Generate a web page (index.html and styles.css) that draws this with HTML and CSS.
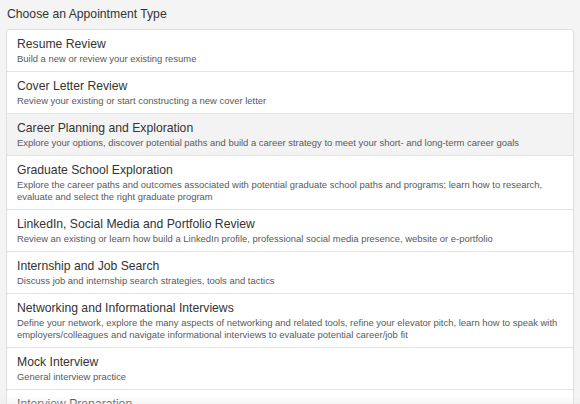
FILE: index.html
```html
<!DOCTYPE html>
<html>
<head>
<meta charset="utf-8">
<link rel="stylesheet" href="styles.css">
</head>
<body>
<div class="page">
  <h1 class="heading">Choose an Appointment Type</h1>
  <ul class="list">
    <li class="item">
      <div class="title">Resume Review</div>
      <div class="desc">Build a new or review your existing resume</div>
    </li>
    <li class="item">
      <div class="title">Cover Letter Review</div>
      <div class="desc">Review your existing or start constructing a new cover letter</div>
    </li>
    <li class="item active">
      <div class="title">Career Planning and Exploration</div>
      <div class="desc">Explore your options, discover potential paths and build a career strategy to meet your short- and long-term career goals</div>
    </li>
    <li class="item">
      <div class="title">Graduate School Exploration</div>
      <div class="desc">Explore the career paths and outcomes associated with potential graduate school paths and programs; learn how to research, evaluate and select the right graduate program</div>
    </li>
    <li class="item">
      <div class="title">LinkedIn, Social Media and Portfolio Review</div>
      <div class="desc">Review an existing or learn how build a LinkedIn profile, professional social media presence, website or e-portfolio</div>
    </li>
    <li class="item">
      <div class="title">Internship and Job Search</div>
      <div class="desc">Discuss job and internship search strategies, tools and tactics</div>
    </li>
    <li class="item">
      <div class="title">Networking and Informational Interviews</div>
      <div class="desc">Define your network, explore the many aspects of networking and related tools, refine your elevator pitch, learn how to speak with employers/colleagues and navigate informational interviews to evaluate potential career/job fit</div>
    </li>
    <li class="item">
      <div class="title">Mock Interview</div>
      <div class="desc">General interview practice</div>
    </li>
    <li class="item">
      <div class="title">Interview Preparation</div>
      <div class="desc">Prepare for an upcoming interview</div>
    </li>
  </ul>
</div>
<div class="fade"></div>
</body>
</html>
```

FILE: styles.css
```css
html, body {
  margin: 0;
  padding: 0;
  background: #f4f4f4;
  height: 100%;
  overflow: hidden;
}
body {
  font-family: "Liberation Sans", Arial, sans-serif;
  color: #333;
}
.page {
  padding: 6px 6px 0 6px;
}
.heading {
  margin: 0 0 6px 1px;
  font-size: 12.2px;
  font-weight: normal;
  line-height: 17px;
  color: #333;
}
.list {
  list-style: none;
  margin: 0;
  padding: 0;
  background: #fff;
  border: 1px solid #dedede;
  border-radius: 3px;
}
.item {
  padding: 6px 10px 6px 10px;
  border-bottom: 1px solid #e3e3e3;
}
.item.active {
  background: #f3f3f3;
}
.title {
  font-size: 12.2px;
  line-height: 17px;
  color: #333;
}
.desc {
  font-size: 9.45px;
  line-height: 12px;
  color: #595959;
}
.fade {
  position: fixed;
  left: 0;
  right: 0;
  bottom: 0;
  height: 8px;
  background: linear-gradient(to bottom, rgba(240, 240, 240, 0), rgba(235, 235, 235, 0.5));
  pointer-events: none;
}
```
